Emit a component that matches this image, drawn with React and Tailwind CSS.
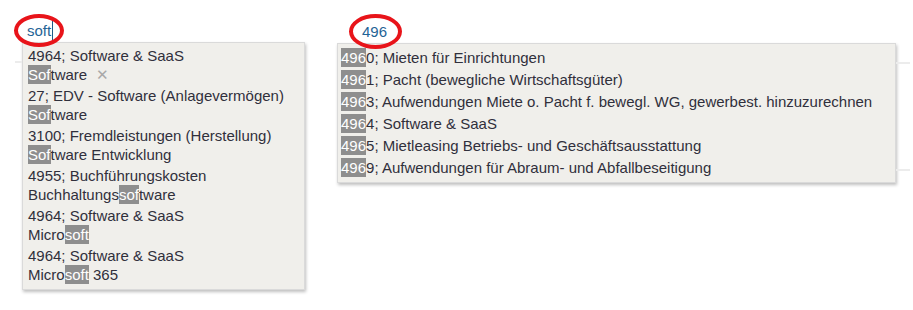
import React from 'react';

const leftItems = [
  { title: '4964; Software & SaaS', pre: '', hit: 'Sof', post: 'tware', remove: true },
  { title: '27; EDV - Software (Anlagevermögen)', pre: '', hit: 'Sof', post: 'tware' },
  { title: '3100; Fremdleistungen (Herstellung)', pre: '', hit: 'Sof', post: 'tware Entwicklung' },
  { title: '4955; Buchführungskosten', pre: 'Buchhaltungs', hit: 'sof', post: 'tware' },
  { title: '4964; Software & SaaS', pre: 'Micro', hit: 'soft', post: '' },
  { title: '4964; Software & SaaS', pre: 'Micro', hit: 'soft', post: ' 365' },
];

const rightItems = [
  ['0', '; Mieten für Einrichtungen'],
  ['1', '; Pacht (bewegliche Wirtschaftsgüter)'],
  ['3', '; Aufwendungen Miete o. Pacht f. bewegl. WG, gewerbest. hinzuzurechnen'],
  ['4', '; Software & SaaS'],
  ['5', '; Mietleasing Betriebs- und Geschäftsausstattung'],
  ['9', '; Aufwendungen für Abraum- und Abfallbeseitigung'],
];

function Hit({ children }) {
  return <span className="bg-[#8e8e8e] text-white py-px">{children}</span>;
}

export default function App() {
  return (
    <div
      className="relative w-[913px] h-[310px] bg-white flex text-[15px] text-[#30303c] overflow-hidden"
      style={{ fontFamily: '"Liberation Sans", Arial, sans-serif' }}
    >
      {/* faint background lines */}
      <div className="absolute left-[15px] top-[61px] w-[7px] h-[2px] bg-[#ececec]" />
      <div className="absolute left-[896px] top-[62px] w-[14px] h-[2px] bg-[#ececec]" />
      <div className="absolute left-[896px] top-[169px] w-[14px] h-[2px] bg-[#ececec]" />

      {/* left search */}
      <div className="ml-[22px] w-[283px] flex flex-col">
        <div className="h-[42px] pt-[21px] pl-[5px] leading-[20px] text-[#1f6496] flex items-start">
          <span>soft</span>
          <span className="w-px h-[20px] bg-[#1f5a86] ml-px" />
        </div>
        <div className="bg-[#f0efeb] border border-[#dadada] shadow-[1px_2px_3px_rgba(0,0,0,0.25)] pt-[2px] pb-[4px] pl-[5px]">
          {leftItems.map((it, i) => (
            <div key={i} className="py-px leading-[19px]">
              <div>{it.title}</div>
              <div className="flex items-center">
                <span>
                  {it.pre}
                  <Hit>{it.hit}</Hit>
                  {it.post}
                </span>
                {it.remove && <span className="ml-[9px] text-[#a8a8a8] text-[15px]">✕</span>}
              </div>
            </div>
          ))}
        </div>
      </div>

      {/* right search */}
      <div className="ml-[32px] w-[559px] flex flex-col">
        <div className="h-[43px] pt-[22px] pl-[25px] leading-[20px] text-[#1f6496]">496</div>
        <div className="bg-[#f0efeb] border border-[#dadada] shadow-[1px_2px_3px_rgba(0,0,0,0.25)] py-[3px] pl-[3px]">
          {rightItems.map(([d, rest], i) => (
            <div key={i} className="h-[22px] leading-[22px] whitespace-nowrap">
              <Hit>496</Hit>
              {d}
              {rest}
            </div>
          ))}
        </div>
      </div>

      {/* red annotation circles */}
      <div className="absolute left-[14px] top-[14px] w-[50px] h-[33px] rounded-[50%] border-[4px] border-[#e8141a]" />
      <div className="absolute left-[349px] top-[14px] w-[53px] h-[35px] rounded-[50%] border-[4px] border-[#e8141a]" />
    </div>
  );
}
